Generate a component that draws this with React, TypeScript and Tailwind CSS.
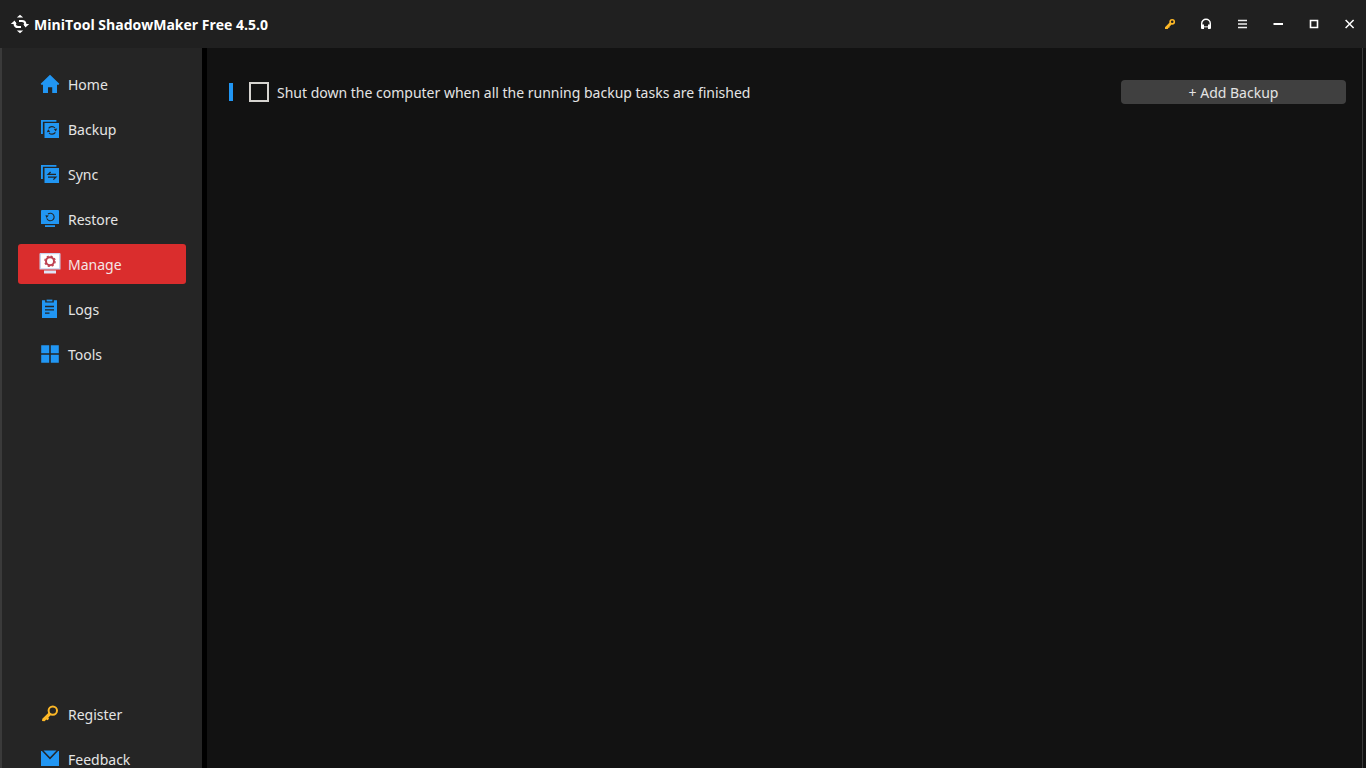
import React from 'react';

type IconProps = { children: React.ReactNode; className?: string };

function Icon({ children, className = 'size-5' }: IconProps) {
  return (
    <svg viewBox="0 0 20 20" className={className} fill="currentColor" aria-hidden="true">
      {children}
    </svg>
  );
}

const dark = '#252525';

const HomeIcon = () => (
  <Icon>
    <path d="M10 .7 19.3 9.8 18.7 10.8H17V19H12.2V13.2H8V19H3V10.8H1.3L.7 9.8Z" />
  </Icon>
);

const BackupIcon = () => (
  <Icon>
    <path d="M1 1H16.4V2.8H2.9V15H1Z" />
    <path d="M4.5 4H19V19H4.5Z" />
    <g fill="none" stroke={dark} strokeWidth="1.1">
      <path d="M8.6 9.4a4.1 4.1 0 0 1 6.4-.4" />
      <path d="M15.4 13.4a4.1 4.1 0 0 1-6.4.4" />
    </g>
    <path fill={dark} d="M17.2 9.6 15.8 12.6 13.8 10ZM6.8 13.2 8.2 10.2 10.2 12.8Z" />
  </Icon>
);

const SyncIcon = () => (
  <Icon>
    <path d="M1 1H16.4V2.8H2.9V15H1Z" />
    <path d="M4.5 4H19V19H4.5Z" />
    <path fill="none" stroke={dark} strokeWidth="1.3" d="M16 10.4H8.2L10.6 8M8 13.2H15.8L13.4 15.6" />
  </Icon>
);

const RestoreIcon = () => (
  <Icon>
    <path d="M2 1H18Q19 1 19 2V15H1V2Q1 1 2 1Z" />
    <path d="M5 16.2H15V18H5Z" />
    <path fill="none" stroke={dark} strokeWidth="1.1" d="M8 5a3.8 3.8 0 1 1-1.2 4.4" />
    <path fill={dark} d="M5.4 6.2 8.8 6.6 6.4 9Z" />
  </Icon>
);

const ManageIcon = () => (
  <svg viewBox="0 0 22 22" className="h-[22px] w-[22px]" aria-hidden="true">
    <path fill="#c9d3ee" d="M1.5 0H20.5Q21.5 0 21.5 1V16.5H.5V1Q.5 0 1.5 0Z" />
    <path fill="#fff" d="M2 1.2H20V15.2H2Z" />
    <path fill="#dfe5f7" d="M5 17.5H17V20.5H5Z" />
    <circle cx="11" cy="8.2" r="4" fill="none" stroke="#bd4051" strokeWidth="2" />
    <circle cx="11" cy="8.2" r="5.2" fill="none" stroke="#bd4051" strokeWidth="1.2" strokeDasharray="2.1 1.984" />
  </svg>
);

const LogsIcon = () => (
  <Icon>
    <path d="M2 1.2H5.2V3.6H13.8V1.2H17V19H2Z" />
    <path d="M6.6 .6H12.4V2.4H6.6Z" />
    <path fill="none" stroke={dark} strokeWidth="1.3" d="M5 7.5H14M5 10.8H14M5 14.2H9.5" />
  </Icon>
);

const ToolsIcon = () => (
  <Icon>
    <path d="M1.2 1.2H9.2V9.2H1.2ZM10.8 1.2H18.8V9.2H10.8ZM1.2 10.8H9.2V18.8H1.2ZM10.8 10.8H18.8V18.8H10.8Z" />
  </Icon>
);

const KeyIcon = () => (
  <Icon>
    <circle cx="12.8" cy="6.6" r="4.2" fill="none" stroke="#fdb827" strokeWidth="2" />
    <path fill="#fdb827" d="M9 8.2 11.4 10.6 8.4 13.5 9 14.8 7.6 16.2 6.3 15.5 4.6 17.2 2 17 2.3 14.8Z" />
  </Icon>
);

const MailIcon = () => (
  <Icon>
    <path d="M3.5 1.4H16.5L10 8.2ZM1 2H1.9L10 10.6 18.1 2H19V17H1Z" />
  </Icon>
);

const Logo = () => (
  <svg viewBox="0 0 20 20" className="size-5 text-white" fill="currentColor" aria-hidden="true">
    <path d="M10 .8 13.2 3.4H6.8ZM10 19.2 6.8 16.6H13.2Z" />
    <path d="M.8 10 4.6 6.4 6.6 10ZM19.2 10 15.4 13.6 13.4 10Z" />
    <g fill="none" stroke="currentColor" strokeWidth="2.2">
      <path d="M4.6 8V9.6Q4.8 13 8 13H11" />
      <path d="M15.4 12V10.4Q15.2 7 12 7H9" />
    </g>
  </svg>
);

const mainItems = [
  { label: 'Home', icon: <HomeIcon /> },
  { label: 'Backup', icon: <BackupIcon /> },
  { label: 'Sync', icon: <SyncIcon /> },
  { label: 'Restore', icon: <RestoreIcon /> },
  { label: 'Manage', icon: <ManageIcon />, active: true },
  { label: 'Logs', icon: <LogsIcon /> },
  { label: 'Tools', icon: <ToolsIcon /> },
];

const footerItems = [
  { label: 'Register', icon: <KeyIcon /> },
  { label: 'Feedback', icon: <MailIcon /> },
];

function NavItem({ label, icon, active }: { label: string; icon: React.ReactNode; active?: boolean }) {
  return (
    <li>
      <a
        href={'#' + label.toLowerCase()}
        aria-current={active ? 'page' : undefined}
        className={
          active
            ? 'flex h-10 items-center gap-1.5 rounded-[3px] bg-[#da2d2d] pl-5 text-[#f4e6e6]'
            : 'flex h-10 items-center gap-1.5 rounded-[3px] pl-5 text-[#e4e4e4]'
        }
      >
        <span className="flex w-6 justify-center pb-px text-[#2196f3]">{icon}</span>
        <span className="pt-px leading-5">{label}</span>
      </a>
    </li>
  );
}

const windowButtons = [
  {
    label: 'Register',
    icon: (
      <svg viewBox="0 0 12 12" className="size-3" aria-hidden="true">
        <circle cx="8.2" cy="3.8" r="2.1" fill="none" stroke="#fdb827" strokeWidth="1.6" />
        <path fill="#fdb827" d="M5.6 4.6 7.6 6.6 5.6 8.6 5.4 9.8 4.4 9.8 3.8 11H1V9.2Z" />
      </svg>
    ),
  },
  {
    label: 'Support',
    icon: (
      <svg viewBox="0 0 12 12" className="size-3" aria-hidden="true">
        <path d="M1.7 8V5.6a4.3 4.3 0 0 1 8.6 0V8" fill="none" stroke="#fff" strokeWidth="1.4" />
        <path d="M1 6.5H4V11H2Q1 11 1 10ZM8 6.5H11V10Q11 11 10 11H8Z" fill="#fff" />
        <path d="M4 8H8V9.5H4Z" fill="#aaa" />
      </svg>
    ),
  },
  {
    label: 'Menu',
    icon: (
      <svg viewBox="0 0 12 12" className="size-3" aria-hidden="true">
        <path d="M2 2.5H11M2 6H11M2 9.5H11" stroke="#eee" strokeWidth="1.6" />
      </svg>
    ),
  },
  {
    label: 'Minimize',
    icon: (
      <svg viewBox="0 0 12 12" className="size-3" aria-hidden="true">
        <path d="M1.5 6H11" stroke="#fff" strokeWidth="2" />
      </svg>
    ),
  },
  {
    label: 'Maximize',
    icon: (
      <svg viewBox="0 0 12 12" className="size-3" aria-hidden="true">
        <path d="M2.5 2.5H9.5V9.5H2.5Z" fill="none" stroke="#fff" strokeWidth="1.6" />
      </svg>
    ),
  },
  {
    label: 'Close',
    icon: (
      <svg viewBox="0 0 12 12" className="size-3" aria-hidden="true">
        <path d="M1.6 2 9.6 10M9.6 2 1.6 10" stroke="#fff" strokeWidth="1.5" />
      </svg>
    ),
  },
];

export default function App() {
  return (
    <div className="flex h-screen flex-col overflow-hidden bg-[#121212] font-['Noto_Sans','Open_Sans',sans-serif] text-[14px] text-[#e4e4e4]">
      <header className="flex h-12 shrink-0 items-center justify-between bg-[#202020] pl-2.5">
        <div className="flex items-center gap-1">
          <Logo />
          <h1 className="pt-0.5 font-['Open_Sans','Noto_Sans',sans-serif] text-[14px] leading-5 font-bold text-white">
            MiniTool ShadowMaker Free 4.5.0
          </h1>
        </div>
        <div className="-mr-0.5 flex">
          {windowButtons.map((b) => (
            <button key={b.label} type="button" aria-label={b.label} className="flex h-12 w-9 items-center justify-center">
              {b.icon}
            </button>
          ))}
        </div>
      </header>
      <div className="flex min-h-0 flex-1">
        <aside className="flex w-[207px] shrink-0 flex-col border-r-[5px] border-l-2 border-r-black border-l-[#3a3a3a] bg-[#252525]">
          <nav aria-label="Main" className="flex flex-1 flex-col px-4 pt-4">
            <ul className="flex flex-col gap-[5px]">
              {mainItems.map((item) => (
                <NavItem key={item.label} {...item} />
              ))}
            </ul>
            <div className="min-h-80 flex-1" />
            <ul className="flex flex-col gap-[5px]">
              {footerItems.map((item) => (
                <NavItem key={item.label} {...item} />
              ))}
            </ul>
          </nav>
        </aside>
        <main className="mr-[3px] flex-1 border-r border-[#3a3a3a] pt-8 pr-4 pl-[22px]">
          <div className="flex h-6 items-center justify-between">
            <div className="flex items-center">
              <span className="h-[18px] w-1 bg-[#2196f3]" />
              <label className="ml-4 flex items-center gap-2 leading-5">
                <input
                  type="checkbox"
                  className="size-5 appearance-none border-2 border-[#d6d4d0] checked:bg-[#2196f3]"
                />
                <span className="pt-0.5">Shut down the computer when all the running backup tasks are finished</span>
              </label>
            </div>
            <button type="button" className="h-6 w-[225px] rounded-[4px] bg-[#404040] pt-0.5 leading-5">
              + Add Backup
            </button>
          </div>
        </main>
      </div>
    </div>
  );
}
